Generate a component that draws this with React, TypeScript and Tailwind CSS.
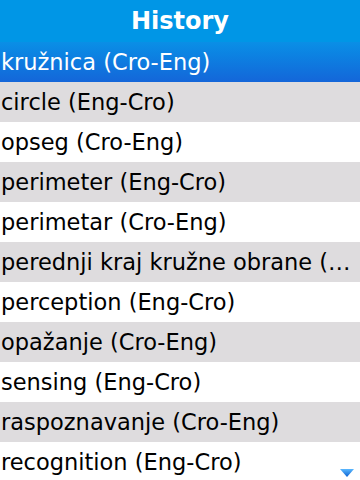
const items = [
  "circle (Eng-Cro)",
  "opseg (Cro-Eng)",
  "perimeter (Eng-Cro)",
  "perimetar (Cro-Eng)",
  "perednji kraj kružne obrane (…",
  "perception (Eng-Cro)",
  "opažanje (Cro-Eng)",
  "sensing (Eng-Cro)",
  "raspoznavanje (Cro-Eng)",
  "recognition (Eng-Cro)",
];

export default function App() {
  return (
    <div
      className="relative w-[360px] h-[480px] overflow-hidden bg-white"
      style={{ fontFamily: '"DejaVu Sans", sans-serif' }}
    >
      <div className="h-[42px] bg-[#0096e6] flex items-center justify-center">
        <h1 className="text-white font-bold text-[24px] leading-none">History</h1>
      </div>
      <div className="h-[40px] bg-gradient-to-b from-[#0a8fe6] to-[#1466d9] flex items-center pl-[1px]">
        <span className="text-white text-[22.5px] leading-none whitespace-nowrap">
          kružnica (Cro-Eng)
        </span>
      </div>
      {items.map((item, i) => (
        <div
          key={item}
          className={`h-[40px] flex items-center pl-[1px] ${
            i % 2 === 0 ? "bg-[#dedcde]" : "bg-white"
          }`}
        >
          <span className="text-black text-[22.5px] leading-none whitespace-nowrap">{item}</span>
        </div>
      ))}
      <svg
        className="absolute right-[6px] bottom-[3px]"
        width="14"
        height="8"
        viewBox="0 0 14 8"
      >
        <defs>
          <linearGradient id="arr" x1="0" y1="0" x2="0" y2="1">
            <stop offset="0" stopColor="#5ab8ff" />
            <stop offset="1" stopColor="#0a5fd0" />
          </linearGradient>
        </defs>
        <polygon points="0,0 14,0 7,8" fill="url(#arr)" />
      </svg>
    </div>
  );
}
